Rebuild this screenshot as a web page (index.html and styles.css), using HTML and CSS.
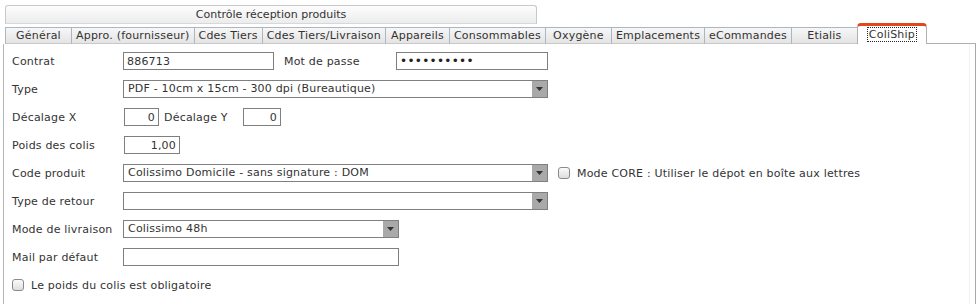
FILE: index.html
```html
<!DOCTYPE html>
<html lang="fr">
<head>
<meta charset="utf-8">
<title>ColiShip</title>
<link rel="stylesheet" href="styles.css">
</head>
<body>
<div class="page">
  <div class="header">Contrôle réception produits</div>
  <div class="tabs">
    <div class="tab">Général</div>
    <div class="tab">Appro. (fournisseur)</div>
    <div class="tab">Cdes Tiers</div>
    <div class="tab">Cdes Tiers/Livraison</div>
    <div class="tab">Appareils</div>
    <div class="tab">Consommables</div>
    <div class="tab">Oxygène</div>
    <div class="tab">Emplacements</div>
    <div class="tab">eCommandes</div>
    <div class="tab tab-last">Etialis</div>
    <div class="tab tab-active"><span class="focus">ColiShip</span></div>
    <div class="tabs-fill"></div>
  </div>
  <div class="panel">
    <div class="row">
      <span class="label">Contrat</span>
      <input class="input w-contrat" type="text" value="886713">
      <span class="label label-mdp">Mot de passe</span>
      <input class="input w-mdp" type="password" value="xxxxxxxxxx">
    </div>
    <div class="row">
      <span class="label">Type</span>
      <div class="select w-long"><span class="select-text">PDF - 10cm x 15cm - 300 dpi (Bureautique)</span><span class="arrow"><svg width="7" height="4" viewBox="0 0 7 4"><path d="M0 0H7L3.5 4Z" fill="#333"/></svg></span></div>
    </div>
    <div class="row">
      <span class="label">Décalage X</span>
      <input class="input num w-dx" type="text" value="0">
      <span class="label-dy">Décalage Y</span>
      <input class="input num w-dy" type="text" value="0">
    </div>
    <div class="row">
      <span class="label">Poids des colis</span>
      <input class="input num w-poids" type="text" value="1,00">
    </div>
    <div class="row">
      <span class="label">Code produit</span>
      <div class="select w-long"><span class="select-text">Colissimo Domicile - sans signature : DOM</span><span class="arrow"><svg width="7" height="4" viewBox="0 0 7 4"><path d="M0 0H7L3.5 4Z" fill="#333"/></svg></span></div>
      <label class="check check-core"><span class="box"></span>Mode CORE : Utiliser le dépot en boîte aux lettres</label>
    </div>
    <div class="row">
      <span class="label">Type de retour</span>
      <div class="select w-long"><span class="select-text"></span><span class="arrow"><svg width="7" height="4" viewBox="0 0 7 4"><path d="M0 0H7L3.5 4Z" fill="#333"/></svg></span></div>
    </div>
    <div class="row">
      <span class="label">Mode de livraison</span>
      <div class="select w-mid"><span class="select-text">Colissimo 48h</span><span class="arrow"><svg width="7" height="4" viewBox="0 0 7 4"><path d="M0 0H7L3.5 4Z" fill="#333"/></svg></span></div>
    </div>
    <div class="row">
      <span class="label">Mail par défaut</span>
      <input class="input w-mid" type="text" value="">
    </div>
    <div class="row">
      <label class="check"><span class="box"></span>Le poids du colis est obligatoire</label>
    </div>
  </div>
</div>
</body>
</html>
```

FILE: styles.css
```css
html, body {
  margin: 0;
  padding: 0;
  background: #ffffff;
}

body {
  font-family: "DejaVu Sans", Verdana, sans-serif;
  font-size: 11px;
  letter-spacing: 0.2px;
  color: #333333;
}

.page {
  padding: 5px 3px 0 3px;
}

.header {
  margin-left: 2px;
  width: 530px;
  height: 17px;
  line-height: 18px;
  border: 1px solid #c9c9c9;
  border-bottom-color: #d8d8d8;
  border-radius: 3px 3px 0 0;
  background: linear-gradient(#fdfdfd, #ececec);
  text-align: center;
  letter-spacing: 0;
  color: #333;
}

.tabs {
  display: flex;
  align-items: flex-end;
  height: 20px;
  margin-left: 2px;
}

.tab {
  box-sizing: border-box;
  height: 17px;
  min-width: 66px;
  padding: 0 4px;
  line-height: 16px;
  text-align: center;
  background: linear-gradient(#f7f7f7, #e4e4e4);
  border: 1px solid #aab6c2;
  border-right: none;
  border-bottom: 1px solid #c9c9c9;
  color: #333;
  white-space: nowrap;
}

.tab:nth-child(5) {
  min-width: 64px;
}

.tab-last {
  border-right: none;
}

.tab-active {
  height: 21px;
  width: 70px;
  min-width: 70px;
  background: #ffffff;
  border: 1px solid #b0b0b0;
  border-top: 3px solid #e2461c;
  border-bottom: none;
  border-radius: 4px 4px 0 0;
  line-height: 17px;
}

.focus {
  outline: 1px dotted #222;
  outline-offset: 0;
  padding: 0 1px;
}

.tabs-fill {
  flex: 1;
  height: 0;
  border-bottom: 1px solid #b0b0b0;
}

.panel {
  border-left: 1px solid #b5b5b5;
  border-right: 1px solid #a8a8a8;
  box-shadow: inset -5px 0 0 #ffffff, inset -6px 0 0 #f0f0f0;
  width: 973px;
  padding: 8px 0 14px 8px;
  box-sizing: border-box;
  height: 262px;
}

.row {
  display: flex;
  align-items: center;
  height: 18px;
  margin-bottom: 10px;
}

.label {
  width: 111px;
  flex: none;
  white-space: nowrap;
}

.label-mdp {
  margin-left: 10px;
  width: 112px;
}

.label-dy {
  margin: 0 6px 0 5px;
  width: 73px;
  white-space: nowrap;
}

.input {
  box-sizing: border-box;
  height: 18px;
  border: 1px solid #7f7f7f;
  padding: 0 3px;
  font-family: "DejaVu Sans", Verdana, sans-serif;
  font-size: 11px;
  letter-spacing: 0.2px;
  color: #333;
  background: #fff;
  margin: 0;
  outline: none;
}

.num {
  text-align: right;
}

.w-contrat { width: 151px; }
.w-mdp { width: 152px; }
.w-dx { width: 35px; margin-left: 1px; }
.w-dy { width: 38px; }
.w-poids { width: 56px; margin-left: 1px; }
.w-long { width: 425px; }
.w-mid { width: 276px; }

input[type="password"] {
  font-size: 12px;
  letter-spacing: 0.3px;
  color: #222;
}

.select {
  box-sizing: border-box;
  height: 18px;
  display: flex;
  border: 1px solid #7f7f7f;
  background: #fff;
  flex: none;
}

.select-text {
  flex: 1;
  padding-left: 4px;
  line-height: 16px;
  white-space: nowrap;
  overflow: hidden;
}

.arrow {
  width: 15px;
  background: #a9a9a9;
  display: flex;
  align-items: center;
  justify-content: center;
}

.check {
  display: flex;
  align-items: center;
  white-space: nowrap;
}

.check-core {
  margin-left: 10px;
}

.box {
  box-sizing: border-box;
  width: 12px;
  height: 12px;
  border: 1px solid #8a8a8a;
  border-radius: 3px;
  background: linear-gradient(#fbfbfb, #dedede);
  margin-right: 7px;
  flex: none;
}
```
